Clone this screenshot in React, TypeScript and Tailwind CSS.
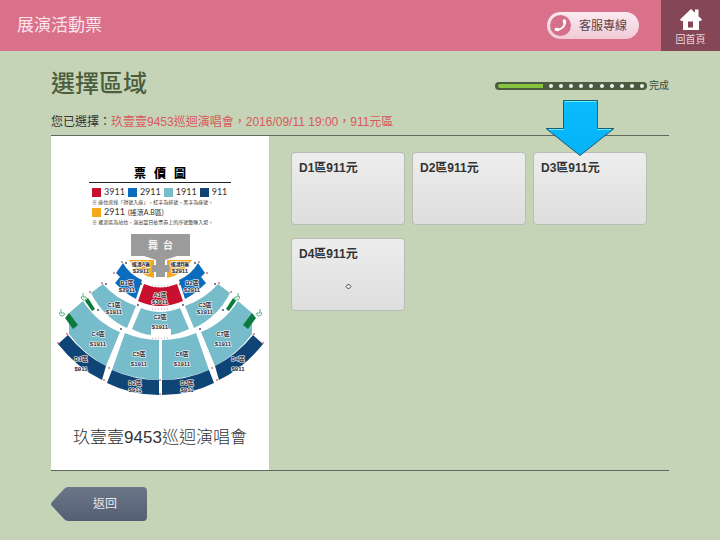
import { useState } from 'react'

const zones = ['D1區911元', 'D2區911元', 'D3區911元', 'D4區911元']

const prices = [
  { price: '3911', color: 'bg-[#c8102e]' },
  { price: '2911', color: 'bg-[#0b6cbd]' },
  { price: '1911', color: 'bg-[#76bccb]' },
  { price: '911', color: 'bg-[#0f4576]' },
]

// Labels on the seating plan: name, price, centre x, baseline of the name
const seatLabels: [string, string, number, number][] = [
  ['搖滾A區', '$2911', 141, 266],
  ['搖滾B區', '$2911', 180, 266],
  ['B1區', '$2911', 127, 285],
  ['B2區', '$2911', 192, 285],
  ['A1區', '$3911', 160, 297],
  ['C1區', '$1911', 114, 307],
  ['C3區', '$1911', 205, 307],
  ['C2區', '$1911', 160, 319],
  ['C4區', '$1911', 98, 336],
  ['C7區', '$1911', 223, 336],
  ['C5區', '$1911', 139, 356],
  ['C6區', '$1911', 182, 356],
  ['D1區', '$911', 81, 361],
  ['D4區', '$911', 238, 361],
  ['D2區', '$911', 135, 385],
  ['D3區', '$911', 187, 385],
]

// Names whose price sits further below
const tallLabels = ['C2區', 'C4區', 'C5區', 'C6區', 'C7區', 'D1區', 'D4區']

/** Left half of the plan; the right half is the same shape mirrored. */
function HalfPlan() {
  return (
    <>
      <path fill="#f5a81c" d="M129 260H154V278Q138 275 129 260Z" />
      <path fill="#0b6cbd" d="M123 263Q129 274 142 280L136 299Q126 294 115 283L120 277L116 273Z" />
      <path fill="#76bccb" d="M103 284Q116 299 136 306L127 328Q104 318 91 293Z" />
      <path fill="#76bccb" d="M83 301Q97 323 120 332L106 366Q84 354 69 334V313Z" />
      <path fill="#76bccb" d="M125 333Q141 340 159 340V380Q134 379 112 370Z" />
      <path fill="#0f4576" d="M68 335Q84 355 106 366L102 380Q77 368 58 344Z" />
      <path fill="#0f4576" d="M112 370Q134 380 159 380V395Q131 395 107 383Z" />
      <path fill="#0b7a3b" d="M69 313L78 325L73 329L65 318Z" />
      <path fill="#0b7a3b" d="M88 298L95 309L92 311L85 301Z" />
      <g fill="none" stroke="#2e9c58" strokeWidth="0.8">
        <path d="M83 293V297H86L87 299M82 296A2 2 0 1 0 86 299" />
        <path d="M61 309V313H64L65 315M60 312A2 2 0 1 0 64 315" />
      </g>
      <g fill="#d8727c">
        <circle cx="122" cy="262" r="1" />
        <circle cx="102" cy="283" r="1" />
        <circle cx="90" cy="292" r="1" />
        <circle cx="67" cy="334" r="1" />
        <circle cx="58" cy="343" r="1" />
        <circle cx="109" cy="368" r="1" />
        <circle cx="104" cy="380" r="1" />
        <circle cx="114" cy="273" r="1" />
      </g>
      <g fill="#4d5563">
        <circle cx="126" cy="263" r="1" />
        <circle cx="106" cy="284" r="1" />
        <circle cx="98" cy="310" r="1" />
        <circle cx="121" cy="329" r="1" />
        <circle cx="138" cy="305" r="1" />
        <circle cx="141" cy="284" r="1" />
      </g>
    </>
  )
}

function SeatingPlan() {
  return (
    <svg className="block w-full" viewBox="51 230 218 170" role="img" aria-label="票價圖">
      <HalfPlan />
      <g transform="translate(321 0) scale(-1 1)">
        <HalfPlan />
      </g>
      <path fill="#c8102e" d="M144 284Q160 291 177 284L183 301Q160 311 138 301Z" />
      <path fill="#76bccb" d="M141 308Q160 316 180 308L189 329Q181 333 171 335V329H151V335Q141 334 132 329Z" />
      <path fill="#9b9b9b" d="M131 234H190V256H177L165 260V265H169V272H165V277H156V272H152V265H156V260L144 256H131Z" />
      <g stroke="#b5708a" strokeWidth="0.7" strokeDasharray="1 2">
        <path d="M152 286H169M152 309H169M152 338H169" />
      </g>
      <g fill="#d8727c">
        <circle cx="160" cy="380" r="1" />
        <circle cx="160" cy="394" r="1" />
      </g>
      <text x="148" y="249" fontSize="10" fontWeight="700" fill="#f4f4f4">舞</text>
      <text x="163" y="249" fontSize="10" fontWeight="700" fill="#f4f4f4">台</text>
      <g
        fontSize="6"
        fontWeight="700"
        textAnchor="middle"
        fill="#1f2430"
        stroke="#fff"
        strokeWidth="1.2"
        strokeLinejoin="round"
        paintOrder="stroke"
      >
        {seatLabels.map(([name, price, x, y]) => (
          <g key={name}>
            <text x={x} y={y} fontSize={name.length > 3 ? 5 : 6}>{name}</text>
            <text x={x} y={y + (tallLabels.includes(name) ? 10 : 7)}>{price}</text>
          </g>
        ))}
      </g>
    </svg>
  )
}

function Progress() {
  return (
    <div className="flex items-center gap-0.5 pt-1">
      <div className="flex h-2 w-[152px] items-center rounded-full bg-[#4b5b41] px-[3px]">
        <div className="h-1 w-[45px] rounded-l-full bg-[#86c440]" />
        <div className="flex flex-1 justify-between pl-[6px]">
          {Array.from({ length: 10 }, (_, i) => (
            <span key={i} className="size-1 rounded-full bg-[#f3f6ef]" />
          ))}
        </div>
      </div>
      <span className="text-[10px] leading-4 text-[#3d4a38]">完成</span>
    </div>
  )
}

/** Blue arrow that points at the suggested zone. */
function Pointer() {
  return (
    <svg className="pointer-events-none absolute -top-[54px] left-[11px] h-[58px] w-[70px]" viewBox="0 0 70 58">
      <defs>
        <linearGradient id="arrow" x1="0" y1="0" x2="0" y2="1">
          <stop offset="0" stopColor="#0cbcff" />
          <stop offset="1" stopColor="#05b2f6" />
        </linearGradient>
      </defs>
      <path fill="url(#arrow)" stroke="#1d5a75" strokeLinejoin="round" d="M18.5 1.5H52.5V29.5H69L35 56.5L1 29.5H18.5Z" />
      <path fill="none" stroke="#5df0f5" d="M19.5 2.5H51.5M4 30.5H19M52 30.5H66" />
    </svg>
  )
}

export default function App() {
  const [selected, setSelected] = useState('')

  return (
    <div className="min-h-screen bg-[#c5d4b7] font-['Liberation_Sans','Noto_Sans_CJK_TC',sans-serif] text-[#333]">
      {/* Header */}
      <header className="flex h-[51px] items-center bg-[#d9718b]">
        <h1 className="flex-1 pl-[17px] text-[17px] text-[#fbe3ea]">展演活動票</h1>
        <button className="mr-[22px] flex h-[27px] w-[92px] items-center rounded-full bg-linear-to-b from-[#fbeaf0] to-[#f0cbd6] pl-[3px] text-xs text-[#5b434b]">
          <span className="mr-2 flex size-[21px] items-center justify-center rounded-full bg-[#d5708a]">
            <svg className="size-[15px]" viewBox="0 0 16 16" fill="none" stroke="#fff" strokeLinecap="round">
              <path strokeWidth="2" d="M12.5 3.5C13.5 8.5 9 13 3.5 12.5" />
              <path strokeWidth="3.4" d="M12 3L12.4 4.8M3.4 12.2L5.2 12.4" />
            </svg>
          </span>
          客服專線
        </button>
        <a href="#home" className="flex h-full w-[59px] flex-col items-center gap-px bg-[#854658] pt-2 text-[10px] leading-4 text-[#f0d3dc]">
          <svg className="h-[23px] w-[22px]" viewBox="0 0 22 23" fill="#fff">
            <path fillRule="evenodd" d="M11 1L15 4.8V1.5H18.5V8.2L22 11.5L21 13H19V22H3V13H1L0 11.5ZM8 13.5V19.5H13V13.5Z" />
          </svg>
          回首頁
        </a>
      </header>

      <main className="px-[51px] pt-[17px]">
        <div className="flex items-center justify-between">
          <h2 className="text-2xl font-medium text-[#4a5d3c]">選擇區域</h2>
          <Progress />
        </div>
        <p className="pt-3 pb-[3px] text-xs leading-5">
          您已選擇：
          <span className="text-[#d9585c]">玖壹壹9453巡迴演唱會，2016/09/11 19:00，911元區</span>
        </p>

        <div className="flex border-y border-[#5f685b]">
          {/* Price map */}
          <section className="w-[218px] shrink-0 bg-white pt-[30px] pb-5">
            <div className="mx-[38px] flex justify-center gap-2 border-b border-[#222] text-xs leading-4 font-black text-black">
              <span>票</span>
              <span>價</span>
              <span>圖</span>
            </div>
            <div className="pl-[41px] font-['Lato','Noto_Sans_CJK_TC',sans-serif]">
              <ul className="flex gap-[3px] pt-px text-[9px] leading-4">
                {prices.map(({ price, color }) => (
                  <li key={price} className="flex items-center gap-[3px]">
                    <span className={`size-[9px] ${color}`} />
                    {price}
                  </li>
                ))}
              </ul>
              <p className="text-[5px] leading-1">※ 座位席採「對號入座」，紅字為排號，黑字為座號。</p>
              <p className="flex items-center gap-[3px] text-[9px] leading-4">
                <span className="size-[9px] bg-[#f5a81c]" />
                2911
                <span className="text-[7px]">(搖滾A.B區)</span>
              </p>
              <p className="text-[5px] leading-1">※ 搖滾區為站位，演出當日依票券上的序號整隊入場。</p>
            </div>
            <div className="pt-1.5">
              <SeatingPlan />
            </div>
            <p className="pt-[26px] text-center text-[17px] leading-6 font-light">玖壹壹9453巡迴演唱會</p>
          </section>

          {/* Zones */}
          <div className="flex flex-1 flex-wrap content-start gap-x-[7px] gap-y-[13px] pt-4 pl-[22px]">
            {zones.map((zone) => (
              <button
                key={zone}
                onClick={() => setSelected(zone)}
                aria-pressed={selected === zone}
                className="relative flex h-[73px] w-[114px] flex-col items-start rounded border border-[#b9bdb7] bg-linear-to-b from-[#ededed] to-[#dedede] px-[7px] py-[7px] text-xs font-bold"
              >
                {zone}
                {zone.startsWith('D3') && <Pointer />}
                {zone.startsWith('D4') && (
                  <svg className="mt-[21px] size-[7px] self-center" viewBox="0 0 7 7" fill="#fff" stroke="#333">
                    <path d="M3.5 1L6 3.5L3.5 6L1 3.5Z" />
                  </svg>
                )}
              </button>
            ))}
          </div>
        </div>

        {/* Back */}
        <button className="relative mt-4 flex h-[34px] w-24 items-center justify-center pl-3 text-xs text-[#e6e9ee]">
          <svg className="absolute inset-0 size-full" viewBox="0 0 96 34" preserveAspectRatio="none">
            <defs>
              <linearGradient id="back" x1="0" y1="0" x2="0" y2="1">
                <stop offset="0" stopColor="#6b7689" />
                <stop offset="1" stopColor="#555f73" />
              </linearGradient>
            </defs>
            <path fill="url(#back)" d="M17 0H92Q96 0 96 4V30Q96 34 92 34H17Q15 34 13 32L1 19Q-1 17 1 15L13 2Q15 0 17 0Z" />
          </svg>
          <span className="relative">返回</span>
        </button>
      </main>
    </div>
  )
}
